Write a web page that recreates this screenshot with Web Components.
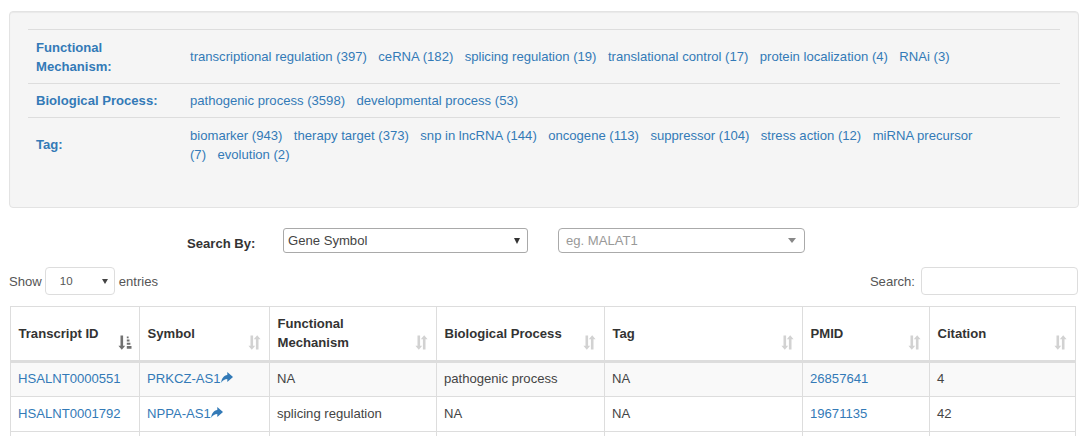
<!DOCTYPE html>
<html><head><meta charset="utf-8"><style>
html,body{margin:0;padding:0;background:#fff;height:436px;overflow:hidden}
body{font:13.1px/19px "Liberation Sans",Arial,sans-serif;color:#333}
</style></head><body>
<app-page>
  <facet-well>
    <facet-row label="Functional Mechanism:" items="transcriptional regulation (397)|ceRNA (182)|splicing regulation (19)|translational control (17)|protein localization (4)|RNAi (3)"></facet-row>
    <facet-row label="Biological Process:" items="pathogenic process (3598)|developmental process (53)"></facet-row>
    <facet-row label="Tag:" items="biomarker (943)|therapy target (373)|snp in lncRNA (144)|oncogene (113)|suppressor (104)|stress action (12)|miRNA precursor|(7)|evolution (2)"></facet-row>
  </facet-well>
  <search-by></search-by>
  <table-controls></table-controls>
  <data-table></data-table>
</app-page>
<script>
function el(name, html){
  customElements.define(name, class extends HTMLElement{
    connectedCallback(){
      if(this.shadowRoot) return;
      this.attachShadow({mode:'open'}).innerHTML = typeof html==='function'?html(this):html;
    }
  });
}
const sortIcon=(dark)=>`<svg class="sort" width="14" height="15" viewBox="0 0 14 15" fill="${dark?'#727272':'#d2d2d2'}">
<path d="M2.500 0.500h2.600v10.300H7.200L3.800 14.800.4 10.800h2.100z"/>
${dark?'<path d="M8.800 1.500h1.800v1.800H8.800zM8.800 4.500h2.700v2H8.800zM8.800 7.700h3.600v2H8.800zM8.800 11h4.700v2.800H8.800z"/>':'<path d="M10.500 14.500H7.900V4.200H5.800L9.200.2l3.400 4h-2.100z"/>'}
</svg>`;
const share=`<svg width="12" height="11" viewBox="0 0 12 11" fill="#337ab7" style="position:absolute;right:-12.500px;top:3px"><path d="M6.300 0 12 5 6.300 10V7C3.800 7 2 8.200.2 10.800.5 6.600 2.900 3.300 6.300 3z"/></svg>`;
el('app-page',`<style>:host{display:flex;flex-direction:column;padding:11px 1px 0 9px;width:1070px}</style><slot></slot>`);
el('facet-well',`<style>:host{display:block;box-sizing:border-box;height:197px;background:#f5f5f5;border:1px solid #e3e3e3;border-radius:4px;box-shadow:inset 0 1px 1px rgba(0,0,0,.05);padding:17px 18px 0 18px}
.list{border-top:1px solid #ddd}
</style><div class="list"><slot></slot></div>`);
el('facet-row',h=>{
  const items=h.getAttribute('items').split('|').map(t=>`<a>${t}</a>`).join(' ');
  const last=h.getAttribute('label')==='Tag:';
  return `<style>:host{display:grid;grid-template-columns:154px 795px;align-items:center;padding:7.500px 0 7px 8px;line-height:19px;${last?'':'border-bottom:1px solid #ddd;'}}
  .l{font-weight:700;color:#337ab7;max-width:124px}
  .i{color:#337ab7}
  a{margin-right:7.800px}
  </style><div class="l">${h.getAttribute('label')}</div><div class="i">${items}</div>`;
});
el('search-by',`<style>:host{display:flex;align-items:center;height:25px;margin-top:20px}
b{margin-left:178px;width:96px;color:#333;padding-top:5px}
.sel{box-sizing:border-box;display:flex;align-items:center;justify-content:space-between;height:25px;border-radius:3px}
.a{width:245px;margin-right:30px;border:1px solid #a9a9a9;padding:0 4px;color:#444;background:#fff}
.b{width:247px;border:1px solid #aaa;border-radius:4px;padding:0 8px 0 7px;color:#999}
.ar{width:0;height:0;border-left:3px solid transparent;border-right:3px solid transparent;border-top:6px solid #333;margin-right:3px}
.b .ar{border-left-width:4px;border-right-width:4px;border-top:5px solid #888;margin:0}
</style><b>Search By:</b><div class="sel a"><span>Gene Symbol</span><i class="ar"></i></div><div class="sel b"><span>eg. MALAT1</span><i class="ar"></i></div>`);
el('table-controls',`<style>:host{display:flex;align-items:center;justify-content:space-between;height:28px;margin-top:14px;margin-right:1px}
.g{display:flex;align-items:center}
.s{box-sizing:border-box;display:flex;align-items:center;justify-content:space-between;width:70px;height:28px;margin:0 4px 0 3px;padding:0 6px 0 14px;border:1px solid #ddd;border-radius:4px;font-size:11.500px;background:#fff}
.ar{width:0;height:0;border-left:3px solid transparent;border-right:3px solid transparent;border-top:5px solid #444}
.in{box-sizing:border-box;width:157px;height:28px;margin-left:6px;border:1px solid #ddd;border-radius:4px;background:#fff}
span{color:#555}
</style><div class="g"><span>Show</span><div class="s"><span>10</span><i class="ar"></i></div><span>entries</span></div><div class="g"><span>Search:</span><div class="in"></div></div>`);
const heads=[['Transcript ID',1],['Symbol'],['Functional<br>Mechanism'],['Biological Process'],['Tag'],['PMID'],['Citation']];
const rows=[['HSALNT0000551','PRKCZ-AS1','NA','pathogenic process','NA','26857641','4'],['HSALNT0001792','NPPA-AS1','splicing regulation','NA','NA','19671135','42'],['','','','','','','']];
el('data-table',`<style>:host{display:block;margin:11px 0 0 1px;width:1065px}
table{border-collapse:collapse;table-layout:fixed;width:1065px}
th,td{border:1px solid #ddd;text-align:left;line-height:19px;box-sizing:border-box}
th{height:54px;border-bottom:3px solid #ddd;position:relative;color:#333;font-weight:700;padding:7px 7.500px 8px;vertical-align:middle;white-space:nowrap}
td{height:35px;padding:6px 7px 8px;color:#444}
tbody tr:nth-child(odd){background:#f9f9f9}
tbody tr:nth-child(3){background:#fff}
a{color:#337ab7}
.sort{position:absolute;right:7px;bottom:10px}
.w{position:relative;display:inline-block}
</style><table><colgroup><col style="width:129px"><col style="width:130px"><col style="width:167px"><col style="width:168px"><col style="width:198px"><col style="width:127px"><col style="width:146px"></colgroup>
<thead><tr>${heads.map(h=>`<th>${h[0]}${sortIcon(h[1])}</th>`).join('')}</tr></thead>
<tbody>${rows.map(r=>`<tr>${r.map((c,i)=>{
  if(i==0||i==5) return `<td><a>${c}</a></td>`;
  if(i==1&&c) return `<td><a class="w">${c}${share}</a></td>`;
  return `<td>${c}</td>`;}).join('')}</tr>`).join('')}</tbody></table>`);
</script>
</body></html>
